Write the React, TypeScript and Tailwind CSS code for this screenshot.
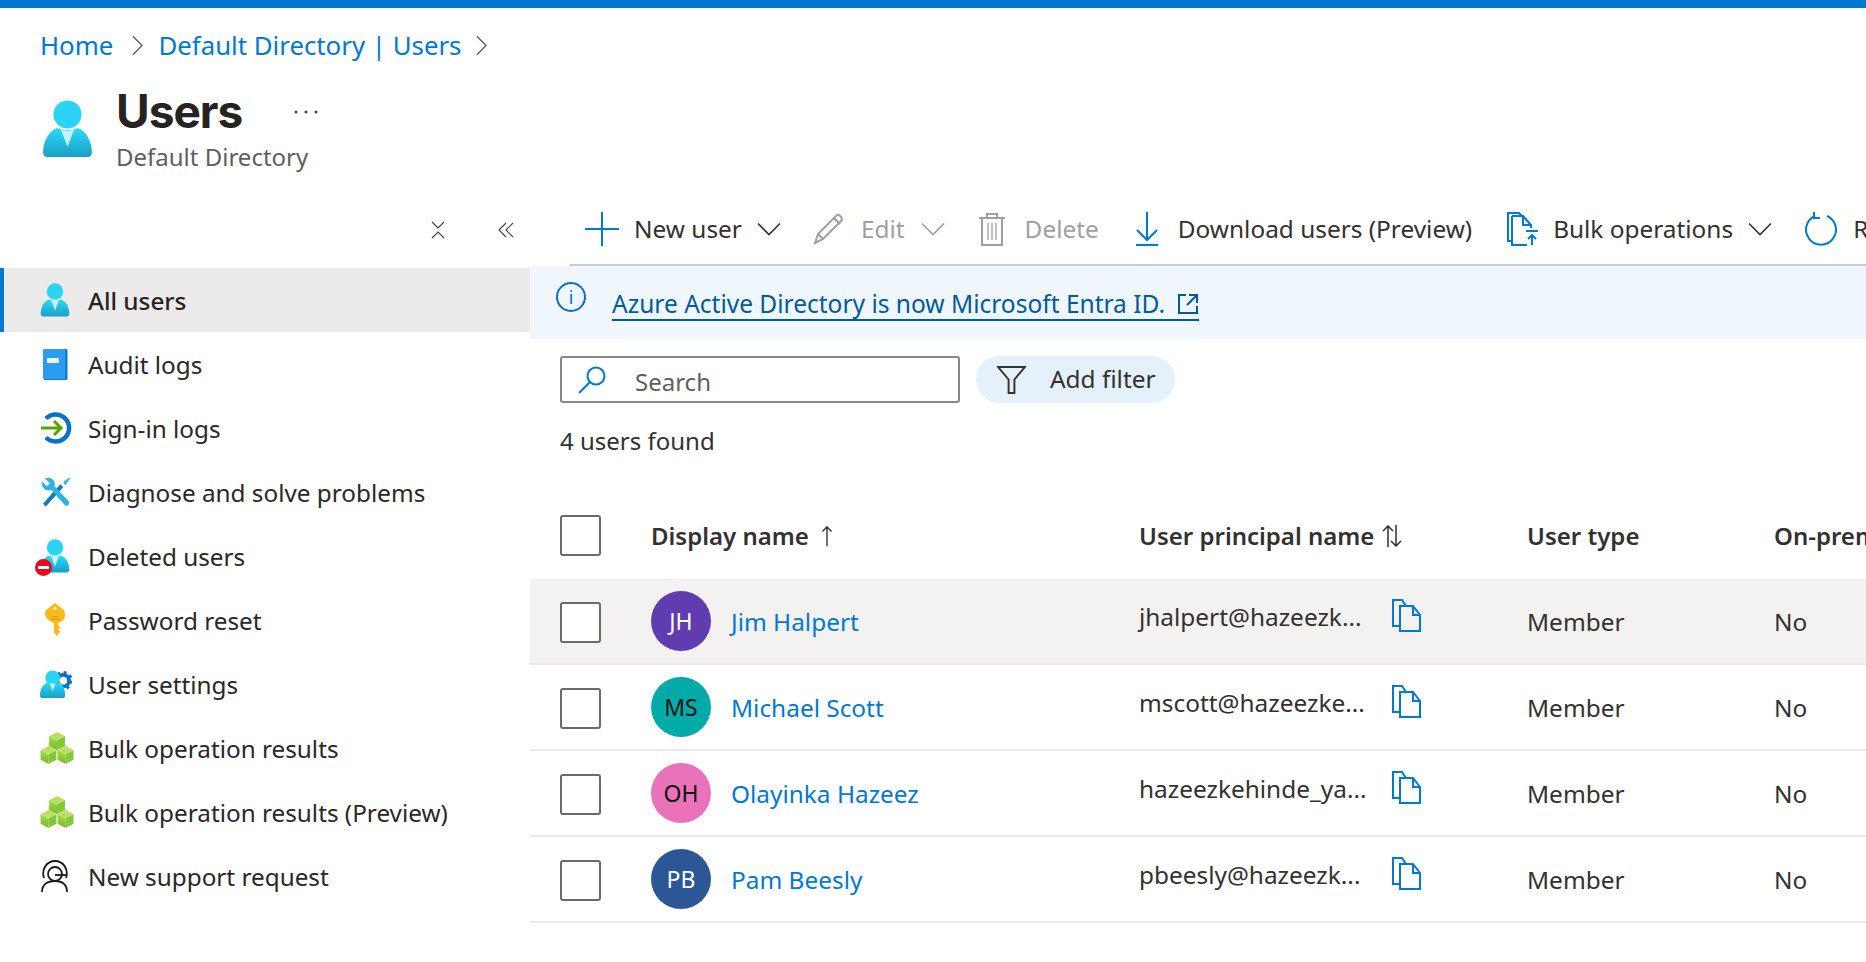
import type { ReactNode } from "react";

function Person({ id, className }: { id: string; className?: string }) {
  return (
    <svg viewBox="0 0 51 58" className={className}>
      <defs>
        <linearGradient id={id + "a"} x1="0" y1="0" x2="0" y2="1">
          <stop offset="0" stopColor="#2bd9fa" />
          <stop offset="1" stopColor="#1a9fc6" />
        </linearGradient>
      </defs>
      <path d="M1 52c0-11 7-22 14-24 6 3 15 3 21 0 7 2 14 13 14 24 0 3-2 5-4 5H5c-2 0-4-2-4-5z" fill={`url(#${id}a)`} />
      <circle cx="25.5" cy="14.5" r="14" fill="#2bd4f5" />
      <path d="M19 30c4 1 9 1 13 0l-6.500 17z" fill="#c5f3fb" />
    </svg>
  );
}

function Cubes({ id }: { id: string }) {
  return (
    <svg viewBox="0 0 32 32" className="ml-[3px] h-[34px] w-[34px] shrink-0">
      <defs>
        <linearGradient id={id} x1="0" y1="0" x2="0" y2="1">
          <stop offset="0" stopColor="#a4d94b" />
          <stop offset="1" stopColor="#76bc2d" />
        </linearGradient>
      </defs>
      {[
        [16, 1],
        [8, 14],
        [24, 14],
      ].map(([x, y]) => (
        <g key={`${x}-${y}`}>
          <path d={`M${x} ${y}l7.500 4-7.500 4-7.500-4z`} fill="#b6e35f" />
          <path d={`M${x - 7.5} ${y + 4}l7.500 4v9l-7.500-4z`} fill={`url(#${id})`} />
          <path d={`M${x + 7.5} ${y + 4}l-7.500 4v9l7.500-4z`} fill="#86c63a" />
        </g>
      ))}
    </svg>
  );
}

const navItems: { label: string; icon: ReactNode; active?: boolean }[] = [
  { label: "All users", active: true, icon: <Person id="nav1" className="h-[34px] w-[30px]" /> },
  {
    label: "Audit logs",
    icon: (
      <svg viewBox="0 0 26 32" className="h-[32px] w-[26px]">
        <path d="M2 1h22a1.500 1.500 0 0 1 1.500 1.500v28a1.500 1.500 0 0 1-1.500 1.500H2z" fill="#0a7cd0" />
        <path d="M1 2a1 1 0 0 1 1-1h20a1 1 0 0 1 1 1v29H2a1 1 0 0 1-1-1z" fill="#2a9df0" />
        <rect x="5" y="10" width="12" height="5" fill="#e8f3fc" />
      </svg>
    ),
  },
  {
    label: "Sign-in logs",
    icon: (
      <svg viewBox="0 0 32 32" className="ml-[1px] h-[32px] w-[32px] shrink-0">
        <path d="M6 6.500A13.500 13.500 0 1 1 6 25.500" fill="none" stroke="#0a72c4" strokeWidth="4.500" />
        <path d="M1 16h20M14 9l7 7-7 7" fill="none" stroke="#57a300" strokeWidth="3" />
      </svg>
    ),
  },
  {
    label: "Diagnose and solve problems",
    icon: (
      <svg viewBox="0 0 32 32" className="ml-[1px] h-[32px] w-[31px] shrink-0">
        <path d="M3 28L21 8l3 3L6 31z" fill="#0f7fb8" />
        <path d="M2 5l5 5 3-3-5-5c4-2 9 0 10 4 1 2 0 3 0 4l15 16c1 2-1 5-4 4L12 14c-4 1-7 0-9-3-1-2-2-4-1-6z" fill="#2bb5e0" />
        <path d="M24 6l6-5 1 1-5 7z" fill="#2bb5e0" />
      </svg>
    ),
  },
  {
    label: "Deleted users",
    icon: (
      <span className="relative flex h-[34px] w-[30px]">
        <Person id="nav5" className="h-[34px] w-[30px]" />
        <span className="absolute bottom-[-3px] left-[-5px] flex h-[17px] w-[17px] items-center justify-center rounded-full bg-[#e50b1f]">
          <span className="h-[3px] w-[11px] bg-white" />
        </span>
      </span>
    ),
  },
  {
    label: "Password reset",
    icon: (
      <svg viewBox="0 0 22 34" className="h-[36px] w-[24px]">
        <path d="M11 1l8 6c2 2 2 8 0 10l-5 3v2l2 2-2 2 2 2-3 4-3-3V20l-5-3C1 15 1 9 3 7z" fill="#fcb91e" />
        <path d="M7 14h8M7 16.500h8" stroke="#e89a10" strokeWidth="1" />
        <circle cx="11" cy="6" r="1.600" fill="#fff2c4" />
      </svg>
    ),
  },
  {
    label: "User settings",
    icon: (
      <svg viewBox="0 0 34 30" className="h-[29px] w-[33px] shrink-0">
        <defs>
          <linearGradient id="nav7" x1="0" y1="0" x2="0" y2="1">
            <stop offset="0" stopColor="#2bd9fa" />
            <stop offset="1" stopColor="#1a9fc6" />
          </linearGradient>
        </defs>
        <circle cx="25" cy="11" r="6" fill="none" stroke="#0a72c4" strokeWidth="4" />
        <circle cx="25" cy="11" r="8.500" fill="none" stroke="#0a72c4" strokeWidth="3" strokeDasharray="3 3.700" />
        <path d="M1 26c0-7 4-12 8-13 3 2 8 2 11 0 4 1 7 6 7 13 0 2-1 3-3 3H3c-1 0-2-1-2-3z" fill="url(#nav7)" />
        <circle cx="14" cy="8" r="7.500" fill="#2bd4f5" />
        <path d="M11 14h6l-3 8z" fill="#c5f3fb" />
      </svg>
    ),
  },
  { label: "Bulk operation results", icon: <Cubes id="cube1" /> },
  { label: "Bulk operation results (Preview)", icon: <Cubes id="cube2" /> },
  {
    label: "New support request",
    icon: (
      <svg viewBox="0 0 28 32" className="h-[32px] w-[28px]" fill="none" stroke="#1b1a19" strokeWidth="1.800">
        <path d="M3 18C0 9 6 1 14 1s14 8 11 17" />
        <circle cx="14" cy="14" r="7" />
        <path d="M14 15h11" />
        <path d="M1 32c0-8 6-11 13-11s12 3 12 11" />
      </svg>
    ),
  },
];

const users = [
  { initials: "JH", name: "Jim Halpert", upn: "jhalpert@hazeezk...", color: "bg-[#5f3db0]", fg: "text-white", hover: true },
  { initials: "MS", name: "Michael Scott", upn: "mscott@hazeezke...", color: "bg-[#02aba7]", fg: "text-[#111]" },
  { initials: "OH", name: "Olayinka Hazeez", upn: "hazeezkehinde_ya...", color: "bg-[#e972b9]", fg: "text-[#111]" },
  { initials: "PB", name: "Pam Beesly", upn: "pbeesly@hazeezk...", color: "bg-[#2b5796]", fg: "text-white" },
];

function Chevron({ color = "#323130" }: { color?: string }) {
  return (
    <svg viewBox="0 0 24 14" className="h-[14px] w-[24px]" fill="none" stroke={color} strokeWidth="1.600">
      <path d="M1 1.500l11 11 11-11" />
    </svg>
  );
}

function Checkbox() {
  return <span className="block h-[41px] w-[41px] rounded-[3px] border-2 border-[#6a6a6a] bg-white" />;
}

function CopyIcon() {
  return (
    <svg viewBox="0 0 29 33" className="mb-[12px] h-[33px] w-[29px]" fill="none" stroke="#0078d4" strokeWidth="2">
      <path d="M8 27H1V1h9l4 6" />
      <path d="M8 7h13l7 9v16H8z" />
      <path d="M21 7v9h7" />
    </svg>
  );
}

export default function App() {
  return (
    <div className="h-screen w-full overflow-hidden bg-white font-['Noto_Sans',sans-serif] text-[#323130]">
      <div className="h-2 bg-[#0078d4]" />

      {/* Breadcrumb */}
      <div className="flex h-[72px] items-center pl-10 pt-[2px] text-[25.800px] text-[#0078d4]">
        <span>Home</span>
        <svg viewBox="0 0 12 22" className="ml-[19px] mr-[15px] h-[21px] w-[11px]" fill="none" stroke="#605e5c" strokeWidth="1.500">
          <path d="M1 1l10 10L1 21" />
        </svg>
        <span>Default Directory | Users</span>
        <svg viewBox="0 0 12 22" className="ml-[15px] h-[21px] w-[11px]" fill="none" stroke="#605e5c" strokeWidth="1.500">
          <path d="M1 1l10 10L1 21" />
        </svg>
      </div>

      {/* Page title */}
      <div className="flex h-[110px] pl-[42px] pt-[5px]">
        <Person id="head" className="mt-[15px] h-[58px] w-[51px]" />
        <div className="ml-[23px]">
          <div className="flex h-[55px] items-center">
            <h1 className="mb-[3px] font-['Inter',sans-serif] text-[46px] font-bold leading-none tracking-[-1px] text-[#252423]">Users</h1>
            <svg viewBox="0 0 24 4" className="mb-[2px] ml-[52px] h-[4px] w-[24px]" fill="#444">
              <circle cx="2" cy="2" r="1.500" />
              <circle cx="12" cy="2" r="1.500" />
              <circle cx="22" cy="2" r="1.500" />
            </svg>
          </div>
          <div className="text-[24px] leading-[34px] text-[#605e5c]">Default Directory</div>
        </div>
      </div>

      <div className="flex">
        {/* Sidebar */}
        <aside className="w-[530px] shrink-0">
          <div className="flex h-[78px] items-center justify-end gap-[52px] pr-4 pt-[2px]">
            <svg viewBox="0 0 16 18" className="h-[18px] w-4" fill="none" stroke="#444" strokeWidth="1.200">
              <path d="M2 1l6 6 6-6M2 17l6-6 6 6" />
            </svg>
            <svg viewBox="0 0 16 16" className="h-4 w-4" fill="none" stroke="#444" strokeWidth="1.200">
              <path d="M8 1L1 8l7 7M15 1L8 8l7 7" />
            </svg>
          </div>
          <nav>
            {navItems.map((item) => (
              <div
                key={item.label}
                className={
                  item.active
                    ? "flex h-16 items-center border-l-4 border-[#0078d4] bg-[#edebe9] pl-9 font-medium text-[#252423]"
                    : "flex h-16 items-center border-l-4 border-transparent pl-9 text-[#292827]"
                }
              >
                <span className="flex w-[30px] shrink-0 items-center justify-center">{item.icon}</span>
                <span className="ml-[18px] pt-[2px] text-[24.300px]">{item.label}</span>
              </div>
            ))}
          </nav>
        </aside>

        {/* Main content */}
        <main className="min-w-0 flex-1">
          <div className="ml-10 flex h-[76px] items-center overflow-hidden whitespace-nowrap border-b-2 border-[#c8ccd0] pl-[15px] pt-[4px] text-[24.400px]">
            <svg viewBox="0 0 34 34" className="h-[34px] w-[34px] shrink-0" fill="none" stroke="#0078d4" strokeWidth="2">
              <path d="M17 0v34M0 17h34" />
            </svg>
            <span className="ml-[15px]">New user</span>
            <span className="ml-[15px] flex"><Chevron /></span>
            <svg viewBox="0 0 32 32" className="ml-[32px] h-[32px] w-[32px] shrink-0" fill="none" stroke="#a19f9d" strokeWidth="2">
              <path d="M2 30l3-9L24 2c2-1 5 2 5 5L10 26z" />
              <path d="M5 21l5 5M21 5l6 6" />
            </svg>
            <span className="ml-[16px] text-[#a19f9d]">Edit</span>
            <span className="ml-[16px] flex"><Chevron color="#a19f9d" /></span>
            <svg viewBox="0 0 28 34" className="ml-[33px] h-[34px] w-[28px] shrink-0" fill="none" stroke="#a19f9d" strokeWidth="2">
              <path d="M1 6h26M9 6V2h10v4M4 6v27h20V6" />
              <path d="M10 11v17M14 11v17M18 11v17" strokeWidth="1.300" />
            </svg>
            <span className="ml-[19px] text-[#a19f9d]">Delete</span>
            <svg viewBox="0 0 24 34" className="ml-[36px] h-[34px] w-[24px] shrink-0" fill="none" stroke="#0078d4" strokeWidth="2">
              <path d="M12 0v28M2 18l10 10 10-10M1 33h22" />
            </svg>
            <span className="ml-[19px]">Download users (Preview)</span>
            <svg viewBox="0 0 32 34" className="ml-[35px] h-[34px] w-[32px] shrink-0" fill="none" stroke="#0078d4" strokeWidth="2">
              <path d="M5 29H1V1h11l3 3" />
              <path d="M5 4h11l8 9v3M5 4v29h15" />
              <path d="M16 4v9h8M19 19h12M25 33V23M21 27l4-4 4 4" />
            </svg>
            <span className="ml-[14px]">Bulk operations</span>
            <span className="ml-[15px] flex"><Chevron /></span>
            <svg viewBox="0 0 32 34" className="ml-[33px] h-[34px] w-[32px] shrink-0" fill="none" stroke="#0078d4" strokeWidth="2">
              <path d="M10 4a15 15 0 1 0 12 0" />
              <path d="M9 0v6h6" />
            </svg>
            <span className="ml-[16px]">Refresh</span>
          </div>

          {/* Notice */}
          <div className="flex h-[73px] items-center bg-[#eff6fc] pl-[26px]">
            <span className="mb-[12px] flex h-[30px] w-[30px] items-center justify-center rounded-full border-2 border-[#0a6ed1] text-[18px] leading-none text-[#0a6ed1]">i</span>
            <span className="ml-[26px] mt-[4px] flex items-center border-b-2 border-[#005a9e] text-[24.500px] leading-[30px] text-[#005a9e]">
              Azure Active Directory is now Microsoft Entra ID.
              <svg viewBox="0 0 22 22" className="ml-[12px] h-[22px] w-[22px]" fill="none" stroke="#005a9e" strokeWidth="2">
                <path d="M9 2H2v18h18v-7M12 2h8v8M20 2L10 12" />
              </svg>
            </span>
          </div>

          {/* Filters */}
          <div className="mt-[17px] flex items-center pl-[30px]">
            <div className="flex h-[47px] w-[400px] items-center rounded-[3px] border-2 border-[#8a8886] pl-[16px]">
              <svg viewBox="0 0 28 28" className="h-[28px] w-[28px]" fill="none" stroke="#0078d4" strokeWidth="2">
                <circle cx="18" cy="10" r="8.500" />
                <path d="M12 16L1 27" />
              </svg>
              <span className="ml-[29px] pt-[4px] text-[24px] text-[#605e5c]">Search</span>
            </div>
            <div className="ml-[16px] flex h-[47px] w-[199px] items-center rounded-full bg-[#e4f0fa] pl-[21px]">
              <svg viewBox="0 0 30 30" className="h-[29px] w-[29px]" fill="none" stroke="#323130" strokeWidth="2">
                <path d="M1 2h28L18 15v14h-6V15z" />
              </svg>
              <span className="ml-[24px] text-[24.400px]">Add filter</span>
            </div>
          </div>
          <div className="ml-[30px] mt-[21px] text-[24px] leading-[34px]">4 users found</div>

          {/* Users table */}
          <div className="mt-[34px] grid h-[87px] grid-cols-[121px_488px_388px_247px_1fr] items-center overflow-hidden whitespace-nowrap text-[24px] font-semibold">
            <span className="pl-[30px]"><Checkbox /></span>
            <span className="flex items-center">
              Display name
              <svg viewBox="0 0 12 22" className="ml-[12px] h-[20px] w-[12px]" fill="none" stroke="#323130" strokeWidth="1.500">
                <path d="M6 22V1M1 6l5-5 5 5" />
              </svg>
            </span>
            <span className="flex items-center">
              User principal name
              <svg viewBox="0 0 20 22" className="ml-[8px] h-[22px] w-[20px]" fill="none" stroke="#323130" strokeWidth="1.500">
                <path d="M6 22V1M1 6l5-5 5 5M14 0v21M9 16l5 5 5-5" />
              </svg>
            </span>
            <span>User type</span>
            <span>On-premises sync</span>
          </div>

          {users.map((u) => (
            <div
              key={u.name}
              className={`grid h-[86px] grid-cols-[121px_488px_388px_247px_1fr] items-center whitespace-nowrap border-b-2 border-[#e9e9e9] text-[24.400px] ${u.hover ? "bg-[#f3f2f1]" : "bg-white"}`}
            >
              <span className="pl-[30px] pt-[2px]"><Checkbox /></span>
              <span className="flex items-center">
                <span className={`flex h-[60px] w-[60px] items-center justify-center rounded-full text-[23px] ${u.color} ${u.fg}`}>{u.initials}</span>
                <span className="ml-[20px] pt-[2px] text-[#0078d4]">{u.name}</span>
              </span>
              <span className="flex items-center">
                <span className="mb-[8px] w-[253px]">{u.upn}</span>
                <CopyIcon />
              </span>
              <span className="pt-[2px]">Member</span>
              <span className="pt-[2px]">No</span>
            </div>
          ))}
        </main>
      </div>
    </div>
  );
}
